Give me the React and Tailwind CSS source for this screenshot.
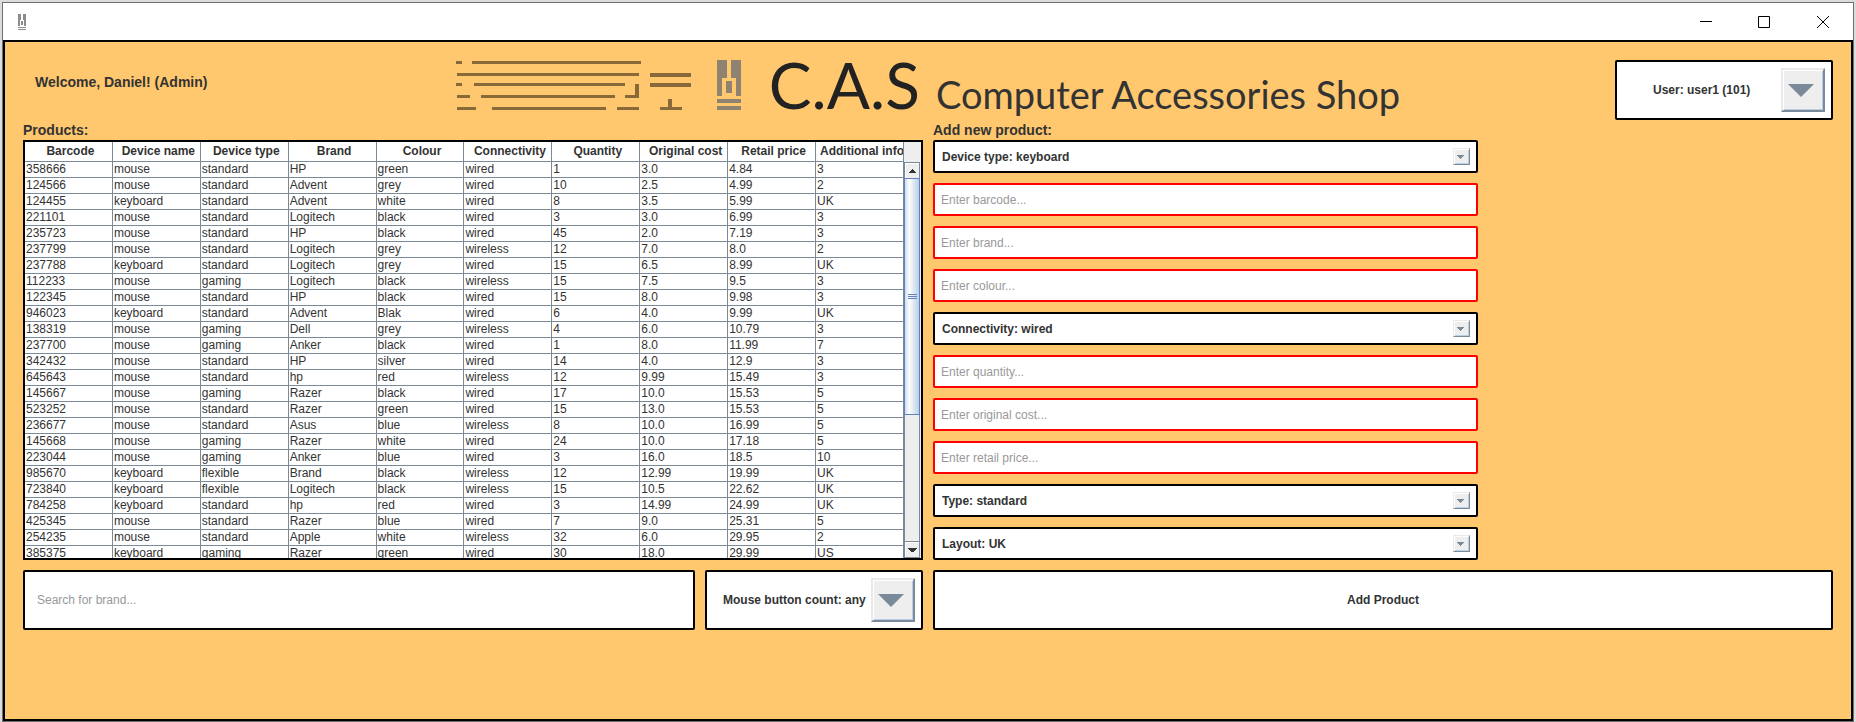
import React from "react";

const columns = ["Barcode", "Device name", "Device type", "Brand", "Colour", "Connectivity", "Quantity", "Original cost", "Retail price", "Additional info"];

const products = `358666,mouse,standard,HP,green,wired,1,3.0,4.84,3
124566,mouse,standard,Advent,grey,wired,10,2.5,4.99,2
124455,keyboard,standard,Advent,white,wired,8,3.5,5.99,UK
221101,mouse,standard,Logitech,black,wired,3,3.0,6.99,3
235723,mouse,standard,HP,black,wired,45,2.0,7.19,3
237799,mouse,standard,Logitech,grey,wireless,12,7.0,8.0,2
237788,keyboard,standard,Logitech,grey,wired,15,6.5,8.99,UK
112233,mouse,gaming,Logitech,black,wireless,15,7.5,9.5,3
122345,mouse,standard,HP,black,wired,15,8.0,9.98,3
946023,keyboard,standard,Advent,Blak,wired,6,4.0,9.99,UK
138319,mouse,gaming,Dell,grey,wireless,4,6.0,10.79,3
237700,mouse,gaming,Anker,black,wired,1,8.0,11.99,7
342432,mouse,standard,HP,silver,wired,14,4.0,12.9,3
645643,mouse,standard,hp,red,wireless,12,9.99,15.49,3
145667,mouse,gaming,Razer,black,wired,17,10.0,15.53,5
523252,mouse,standard,Razer,green,wired,15,13.0,15.53,5
236677,mouse,standard,Asus,blue,wireless,8,10.0,16.99,5
145668,mouse,gaming,Razer,white,wired,24,10.0,17.18,5
223044,mouse,gaming,Anker,blue,wired,3,16.0,18.5,10
985670,keyboard,flexible,Brand,black,wireless,12,12.99,19.99,UK
723840,keyboard,flexible,Logitech,black,wireless,15,10.5,22.62,UK
784258,keyboard,standard,hp,red,wired,3,14.99,24.99,UK
425345,mouse,standard,Razer,blue,wired,7,9.0,25.31,5
254235,mouse,standard,Apple,white,wireless,32,6.0,29.95,2
385375,keyboard,gaming,Razer,green,wired,30,18.0,29.99,US`
  .split("\n")
  .map((line) => line.split(","));

const fields = [
  { kind: "select", label: "Device type", value: "Device type: keyboard" },
  { kind: "text", label: "Barcode", value: "Enter barcode..." },
  { kind: "text", label: "Brand", value: "Enter brand..." },
  { kind: "text", label: "Colour", value: "Enter colour..." },
  { kind: "select", label: "Connectivity", value: "Connectivity: wired" },
  { kind: "text", label: "Quantity", value: "Enter quantity..." },
  { kind: "text", label: "Original cost", value: "Enter original cost..." },
  { kind: "text", label: "Retail price", value: "Enter retail price..." },
  { kind: "select", label: "Type", value: "Type: standard" },
  { kind: "select", label: "Layout", value: "Layout: UK" },
];

function StickMark({ className }) {
  return (
    <svg className={className} viewBox="0 0 24 50" fill="currentColor" aria-hidden="true" shapeRendering="crispEdges">
      <path d="M0 0h10v18H5v18H0zM14 0h10v36h-5V18h-5zM9 21h6v12H9zM0 39h24v4H0zM0 46h24v4H0z" />
    </svg>
  );
}

function KeyboardMark() {
  return (
    <svg className="h-[49px] w-[235px] text-[#87693a]" viewBox="0 0 235 49" fill="currentColor" aria-hidden="true" shapeRendering="crispEdges">
      <path d="M0 0h6v3H0zM16 0h169v3H16zM1 12h182v3H1zM0 22h6v3H0zM18 22h151v3H18zM1 34h13v3H1zM25 34h134v3H25zM169 34h10V23h4v14h-14zM1 46h19v3H1zM36 46h114v3H36zM161 46h22v3h-22zM194 12h41v4h-41zM194 22h41v4h-41zM204 46h8v-8h4v8h10v3h-22z" />
    </svg>
  );
}

function LargeArrow() {
  return (
    <span className="pointer-events-none flex h-11 w-11 items-center justify-center border-2 border-t-[#e9e9e9] border-r-[#7a8a99] border-b-[#7a8a99] border-l-[#e9e9e9] bg-[#eee] pr-1 shadow-[inset_1px_1px_0_#fff,inset_-1px_-1px_0_#b8cfe5]">
      <svg className="h-[13px] w-[26px] text-[#7a8a99]" viewBox="0 0 26 13" fill="currentColor" aria-hidden="true">
        <path d="M0 0h26L13 13z" />
      </svg>
    </span>
  );
}

function LargeSelect({ label, value, inset }) {
  return (
    <label className="grid h-[60px] w-[218px] shrink-0 grid-cols-1 items-center rounded-[2px] border-2 border-black bg-white">
      <select aria-label={label} className={"col-start-1 row-start-1 h-full w-full appearance-none bg-transparent text-xs font-bold outline-none " + inset}>
        <option>{value}</option>
      </select>
      <span className="pointer-events-none col-start-1 row-start-1 mr-1.5 justify-self-end">
        <LargeArrow />
      </span>
    </label>
  );
}

function Field({ kind, label, value }) {
  if (kind === "text") {
    return (
      <input
        aria-label={label}
        placeholder={value}
        className="h-[33px] w-full rounded-[2px] border-2 border-[#f00] bg-white px-1.5 text-xs outline-none placeholder:text-[#999]"
      />
    );
  }
  return (
    <label className="grid h-[33px] w-full grid-cols-1 items-center rounded-[2px] border-2 border-black bg-white">
      <select aria-label={label} className="col-start-1 row-start-1 h-full w-full appearance-none bg-transparent pl-[7px] text-xs font-bold outline-none">
        <option>{value}</option>
      </select>
      <span className="pointer-events-none col-start-1 row-start-1 mr-1.5 flex h-[17px] w-[17px] items-center justify-center justify-self-end border border-t-[#e9e9e9] border-r-[#7a8a99] border-b-[#7a8a99] border-l-[#e9e9e9] bg-[#eee] pr-0.5 shadow-[inset_1px_1px_0_#fff,inset_-1px_-1px_0_#b8cfe5]">
        <svg className="h-1 w-[7px] text-[#7a8a99]" viewBox="0 0 7 4" fill="currentColor" aria-hidden="true" shapeRendering="crispEdges">
          <path d="M0 0h7v1H0zM1 1h5v1H1zM2 2h3v1H2zM3 3h1v1H3z" />
        </svg>
      </span>
    </label>
  );
}

function ScrollBar() {
  return (
    <div className="flex w-[17px] shrink-0 flex-col bg-[#eee]" aria-hidden="true">
      <div className="h-5" />
      <div className="mr-px flex min-h-0 flex-1 flex-col border border-[#7a8a99]">
        <div className="flex h-[15px] shrink-0 items-center justify-center shadow-[inset_1px_1px_0_#fff]">
          <svg className="h-1 w-[7px]" viewBox="0 0 7 4" fill="#333" shapeRendering="crispEdges">
            <path d="M3 0h1v1H3zM2 1h3v1H2zM1 2h5v1H1zM0 3h7v1H0z" />
          </svg>
        </div>
        <div className="-mx-px flex h-[237px] shrink-0 flex-col items-center justify-center gap-px border border-[#6382bf] bg-linear-to-r from-[#cbdcee] via-white via-30% to-[#b8cfe5]">
          <div className="h-px w-[9px] bg-[#6382bf]" />
          <div className="h-px w-[9px] bg-[#6382bf]" />
          <div className="h-px w-[9px] bg-[#6382bf]" />
        </div>
        <div className="flex-1" />
        <div className="flex h-4 shrink-0 items-center justify-center border-t border-[#7a8a99] shadow-[inset_1px_1px_0_#fff]">
          <svg className="h-1 w-[9px]" viewBox="0 0 9 4" fill="#333" shapeRendering="crispEdges">
            <path d="M0 0h9v1H0zM1 1h7v1H1zM2 2h5v1H2zM3 3h3v1H3z" />
          </svg>
        </div>
      </div>
    </div>
  );
}

function ProductTable() {
  return (
    <div className="flex h-[420px] overflow-hidden border-2 border-black bg-white">
      <div className="min-w-0 flex-1 overflow-hidden">
        <table className="w-full table-fixed border-separate border-spacing-0 text-xs">
          <thead>
            <tr>
              {columns.map((name) => (
                <th key={name} className="h-5 overflow-hidden border-r border-b border-[#7a8a99] p-0 pl-1 text-center leading-[19px] font-bold whitespace-nowrap">
                  {name}
                </th>
              ))}
            </tr>
          </thead>
          <tbody>
            {products.map((row) => (
              <tr key={row[0]}>
                {row.map((cell, i) => (
                  <td key={i} className="h-4 border-r border-b border-[#7a8a99] p-0 pl-px leading-[15px] whitespace-nowrap">
                    {cell}
                  </td>
                ))}
              </tr>
            ))}
          </tbody>
        </table>
      </div>
      <ScrollBar />
    </div>
  );
}

export default function App() {
  return (
    <div className="min-h-screen bg-[#dcdcdc] p-0.5 pb-0 font-['Liberation_Sans',Arial,sans-serif] text-[#333]">
      <div className="flex min-h-[720px] flex-col border border-[#707070] bg-white">
        <div className="flex h-[37px] items-center justify-between pl-[15px]">
          <StickMark className="h-[18px] w-2 text-[#8c8c8c]" />
          <div className="flex text-black">
            <button aria-label="Minimise" className="flex h-9 w-[58px] items-center justify-center">
              <svg className="h-3 w-3" viewBox="0 0 12 12" stroke="currentColor" fill="none" aria-hidden="true"><path d="M0 5.5h12" /></svg>
            </button>
            <button aria-label="Maximise" className="flex h-9 w-[58px] items-center justify-center">
              <svg className="h-3 w-3" viewBox="0 0 12 12" stroke="currentColor" fill="none" aria-hidden="true"><path d="M.5.5h11v11H.5z" /></svg>
            </button>
            <button aria-label="Close" className="flex h-9 w-[60px] items-center justify-center">
              <svg className="h-3 w-3" viewBox="0 0 12 12" stroke="currentColor" fill="none" aria-hidden="true"><path d="M0 0l12 12M12 0L0 12" /></svg>
            </button>
          </div>
        </div>
        <main className="flex-1 border-2 border-black bg-[#ffc86e] px-[18px] pt-[18px]">
          <header className="flex h-[60px] justify-between">
            <p className="w-[218px] pt-3 pl-3 text-sm font-bold">Welcome, Daniel! (Admin)</p>
            <div className="flex">
              <div className="pt-px"><KeyboardMark /></div>
              <StickMark className="ml-[26px] h-[50px] w-6 text-[#8e8370]" />
              <h1 className="ml-7 flex items-baseline font-[Lato,sans-serif] leading-[50px] whitespace-nowrap">
                <span className="text-[64px] text-[#222]">C.A.S</span>
                <span className="ml-4 text-[38px]">Computer Accessories Shop</span>
              </h1>
            </div>
            <LargeSelect label="User" value="User: user1 (101)" inset="pl-9" />
          </header>
          <div className="grid grid-cols-2 gap-x-2.5">
            <section>
              <h2 className="h-5 text-sm leading-5 font-bold">Products:</h2>
              <ProductTable />
              <div className="mt-2.5 flex gap-2.5">
                <input aria-label="Search for brand" placeholder="Search for brand..." className="h-[60px] min-w-0 flex-1 rounded-[2px] border-2 border-black bg-white px-3 text-xs outline-none placeholder:text-[#999]" />
                <LargeSelect label="Mouse button count" value="Mouse button count: any" inset="pl-4" />
              </div>
            </section>
            <section>
              <h2 className="h-5 text-sm leading-5 font-bold">Add new product:</h2>
              <div className="flex w-[545px] flex-col gap-2.5">
                {fields.map((field) => (
                  <Field key={field.label} {...field} />
                ))}
              </div>
              <button className="mt-2.5 h-[60px] w-full rounded-[2px] border-2 border-black bg-white text-xs font-bold">Add Product</button>
            </section>
          </div>
        </main>
      </div>
    </div>
  );
}
